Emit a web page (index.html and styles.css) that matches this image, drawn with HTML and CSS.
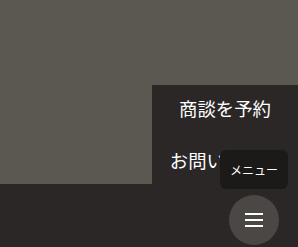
FILE: index.html
```html
<!DOCTYPE html>
<html lang="ja">
<head>
<meta charset="utf-8">
<link rel="stylesheet" href="styles.css">
</head>
<body>
<main class="page">
  <section class="hero"></section>
  <footer class="footer"></footer>
</main>
<nav class="menu-panel">
  <a class="menu-item" href="#">商談を予約</a>
  <a class="menu-item" href="#">お問い合わせ</a>
</nav>
<div class="tooltip">メニュー</div>
<button class="fab" aria-label="メニュー">
  <svg width="18" height="14" viewBox="0 0 18 14"><rect x="0" y="0" width="18" height="2" fill="#fff"/><rect x="0" y="6" width="18" height="2" fill="#fff"/><rect x="0" y="12" width="18" height="2" fill="#fff"/></svg>
</button>
</body>
</html>
```
FILE: styles.css
```css
html, body {
  margin: 0;
  padding: 0;
  height: 100%;
  overflow: hidden;
}
body {
  background: #2b2726;
  font-family: "Noto Sans CJK JP", "Noto Sans", sans-serif;
  color: #fff;
}
.page {
  display: flex;
  flex-direction: column;
  height: 100%;
}
.hero {
  height: 184px;
  background: #5b5852;
  flex: none;
}
.footer {
  flex: 1;
  background: #2b2726;
}
.menu-panel {
  position: fixed;
  left: 152px;
  top: 85px;
  right: 0;
  bottom: 0;
  background: #2b2726;
  display: flex;
  flex-direction: column;
}
.menu-item {
  display: block;
  height: 52px;
  line-height: 47px;
  text-align: center;
  font-size: 18.4px;
  color: #fff;
  text-decoration: none;
}
.tooltip {
  position: fixed;
  left: 220px;
  top: 150px;
  width: 68px;
  height: 39px;
  border-radius: 6px;
  background: #1c1a18;
  color: #fff;
  font-size: 12px;
  display: flex;
  align-items: center;
  justify-content: center;
}
.fab {
  position: fixed;
  left: 229px;
  top: 195px;
  width: 50px;
  height: 50px;
  border: 0;
  padding: 0;
  border-radius: 50%;
  background: #4a4744;
  display: flex;
  align-items: center;
  justify-content: center;
}
.fab svg {
  display: block;
}
```
